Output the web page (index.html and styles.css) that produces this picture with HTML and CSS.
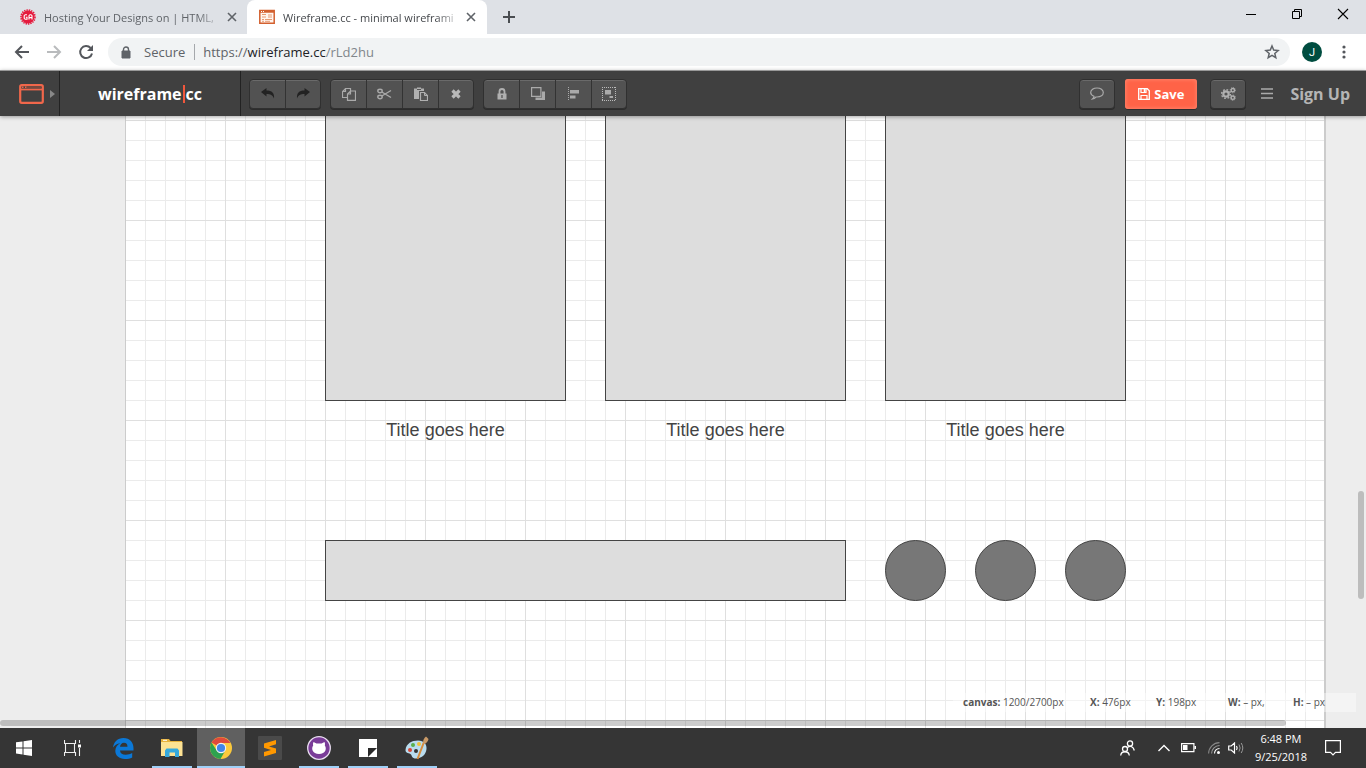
FILE: index.html
```html
<!DOCTYPE html>
<html lang="en">
<head>
<meta charset="utf-8">
<title>Wireframe.cc - minimal wireframing tool</title>
<link rel="stylesheet" href="styles.css">
</head>
<body>
<header class="browser">
  <div class="tabs">
    <div class="tab">
      <svg class="favicon" width="16" height="16" viewBox="0 0 16 16"><circle cx="8" cy="8" r="6.5" fill="#e51b3e"/><circle cx="8" cy="8" r="7" fill="none" stroke="#e51b3e" stroke-width="1.6" stroke-dasharray="1.4 1"/><path d="M7 5.700H5.200L4.200 6.700v2.600l1 1H7V8.200H5.800M9 10.500V6.700l1-1h1l1 1v3.800M9 8.600h3" fill="none" stroke="#fff" stroke-width="1.100"/></svg>
      <span class="tab-title">Hosting Your Designs on | HTML,</span>
      <button class="tab-close" aria-label="Close tab"><svg width="10" height="10" viewBox="0 0 10 10"><path d="M1 1l8 8M9 1l-8 8" stroke="#5f6368" stroke-width="1.600"/></svg></button>
    </div>
    <div class="tab tab-active">
      <svg class="favicon" width="16" height="16" viewBox="0 0 16 16"><path d="M.8 1.500h14.400v12.700H.8z" fill="#fff5ef" stroke="#d3602f" stroke-width="1.500"/><path d="M1 2.500h14" stroke="#d3602f" stroke-width="2.500"/><path d="M2 2.500h1M4 2.500h1" stroke="#fff"/><path d="M3 5.500h4M3 8h4M9 6h4M9 8h4M3 10.500h2M6 10.500h7M3 12.300h2M6 12.300h5" stroke="#e89a72"/></svg>
      <span class="tab-title">Wireframe.cc - minimal wireframi</span>
      <button class="tab-close" aria-label="Close tab"><svg width="10" height="10" viewBox="0 0 10 10"><path d="M1 1l8 8M9 1l-8 8" stroke="#5f6368" stroke-width="1.600"/></svg></button>
    </div>
    <button class="new-tab" aria-label="New tab"><svg width="12" height="12" viewBox="0 0 12 12"><path d="M6 0v12M0 6h12" stroke="#4a4d51" stroke-width="2"/></svg></button>
    <div class="window-buttons">
      <button aria-label="Minimize"><svg width="12" height="12" viewBox="0 0 12 12"><path d="M1 6.500h10" stroke="#000"/></svg></button>
      <button aria-label="Restore"><svg width="12" height="12" viewBox="0 0 12 12"><path d="M1.500 3.500h7v7h-7zM3.500 3.500v-2h7v7h-2" fill="none" stroke="#000"/></svg></button>
      <button aria-label="Close"><svg width="12" height="12" viewBox="0 0 12 12"><path d="M1 1l10 10M11 1L1 11" stroke="#000" stroke-width="1.100"/></svg></button>
    </div>
  </div>
  <div class="nav">
    <button aria-label="Back"><svg width="16" height="16" viewBox="0 0 16 16"><path d="M15 8H2M8 2L2 8l6 6" fill="none" stroke="#54575c" stroke-width="2"/></svg></button>
    <button aria-label="Forward"><svg width="16" height="16" viewBox="0 0 16 16"><path d="M1 8h13M8 2l6 6-6 6" fill="none" stroke="#b9bbbd" stroke-width="2"/></svg></button>
    <button aria-label="Reload"><svg width="16" height="16" viewBox="0 0 16 16"><path d="M12.600 4A6 6 0 1 0 14 9.500" fill="none" stroke="#54575c" stroke-width="2"/><path d="M15 1v6H9z" fill="#54575c"/></svg></button>
    <div class="omnibox">
      <svg width="10" height="13" viewBox="0 0 10 13"><path d="M1 5h8v7H1z" fill="#5f6368" stroke="#5f6368"/><path d="M2.500 5V3.500a2.500 2.500 0 0 1 5 0V5" fill="none" stroke="#5f6368" stroke-width="1.400"/></svg>
      <span class="secure">Secure</span>
      <span class="url">https://<b>wireframe.cc</b><i>/rLd2hu</i></span>
      <button aria-label="Bookmark this page"><svg width="16" height="16" viewBox="0 0 16 16"><path d="M8 2l1.700 4.100 4.400.4-3.300 2.900 1 4.300L8 11.400l-3.800 2.300 1-4.300L1.900 6.500l4.400-.4z" fill="none" stroke="#5f6368" stroke-width="1.500"/></svg></button>
    </div>
    <button class="avatar" aria-label="Profile">J</button>
    <button class="kebab" aria-label="Menu"><svg width="4" height="14" viewBox="0 0 4 14"><g fill="#54575c"><circle cx="2" cy="2" r="1.600"/><circle cx="2" cy="7" r="1.600"/><circle cx="2" cy="12" r="1.600"/></g></svg></button>
  </div>
</header>

<div class="app-bar">
  <button class="frame-picker" aria-label="Choose frame">
    <svg width="25" height="20" viewBox="0 0 25 20"><rect x="1.200" y="1.200" width="22.600" height="17.600" rx="1.500" fill="none" stroke="#f1674b" stroke-width="2.200"/><path d="M2 5.500h21" stroke="#f1674b" stroke-width="1.800"/><path d="M3 3.300h1.500M6 3.300h1.500" stroke="#f1674b" stroke-width="1.600"/><path d="M8 3.300h14" stroke="#8a4a3d"/></svg>
    <svg width="5" height="8" viewBox="0 0 5 8"><path d="M0 0l5 4-5 4z" fill="#888"/></svg>
  </button>
  <a class="logo" href="#">wireframe<span class="logo-bar"></span>cc</a>
  <div class="tools">
    <div class="group">
      <button aria-label="Undo"><svg width="14" height="14" viewBox="0 0 14 14"><path d="M0 5l5.500-4v2.500C11 3.500 13.500 6 13 11.500 11.500 8 9.500 7 5.500 7v2.500z" fill="#222"/></svg></button>
      <button aria-label="Redo"><svg width="14" height="14" viewBox="0 0 14 14"><path d="M14 5L8.500 1v2.500C3 3.500.500 6 1 11.500 2.500 8 4.500 7 8.500 7v2.500z" fill="#222"/></svg></button>
    </div>
    <div class="group">
      <button aria-label="Copy"><svg width="14" height="14" viewBox="0 0 14 14"><path d="M5.500 10.500h-5v-6l3-3h5v3M3.500 1.500v3h-3M5.500 13.300V7l3-3h5v9.300zM8.500 4v3h-3" fill="none" stroke="#aaa" stroke-width="1.200"/></svg></button>
      <button aria-label="Cut"><svg width="15" height="14" viewBox="0 0 15 14"><g fill="none" stroke="#aaa" stroke-width="1.400"><ellipse cx="3" cy="4" rx="2.200" ry="1.700"/><ellipse cx="3" cy="10" rx="2.200" ry="1.700"/><path d="M4.800 5L14 10.500M4.800 9L14 3.500"/></g></svg></button>
      <button aria-label="Paste"><svg width="14" height="14" viewBox="0 0 14 14"><path d="M0 1.500h3V.5h4v1h3V4H5v8H0z" fill="#b0b0b0"/><path d="M3 2.500h4" stroke="#555"/><path d="M6.500 5.500h4l3 3v5h-7z" fill="#555" stroke="#b0b0b0" stroke-width="1.200"/><path d="M10.500 5.500v3h3" fill="none" stroke="#b0b0b0"/></svg></button>
      <button aria-label="Delete"><svg width="12" height="12" viewBox="0 0 12 12"><path d="M2.500 2.500l7 7M9.500 2.500l-7 7" stroke="#b8b8b8" stroke-width="3.200"/></svg></button>
    </div>
    <div class="group">
      <button aria-label="Lock"><svg width="10" height="12" viewBox="0 0 10 12"><path d="M.5 5.500h9v6h-9z" fill="#b0b0b0"/><path d="M2.500 6V3.500a2.500 2.500 0 0 1 5 0V6" fill="none" stroke="#b0b0b0" stroke-width="1.800"/><path d="M5 7v3" stroke="#555" stroke-width="1.300"/></svg></button>
      <button aria-label="Arrange"><svg width="14" height="14" viewBox="0 0 14 14"><path d="M.6.6h9.300v8.800H.6z" fill="none" stroke="#aaa" stroke-width="1.200"/><path d="M11 4.500h3V13H4.500v-2.500H11z" fill="#aaa"/></svg></button>
      <button aria-label="Align"><svg width="14" height="14" viewBox="0 0 14 14"><path d="M1.500 0v14" stroke="#aaa" stroke-dasharray="1 1"/><path d="M3 3h9v3.500H3zM3 8.500h5.500v3H3z" fill="#aaa"/></svg></button>
      <button aria-label="Group"><svg width="14" height="14" viewBox="0 0 14 14"><path d="M0 .5h14M0 13.500h14M.5 0v14M13.500 0v14" fill="none" stroke="#bbb" stroke-dasharray="1 1"/><path d="M3 3h6v4.500H3zM7.500 9h3.500v2H7.500z" fill="#aaa"/></svg></button>
    </div>
  </div>
  <div class="actions">
    <button class="square" aria-label="Comments"><svg width="14" height="13" viewBox="0 0 14 13"><path d="M4 9.300C1.500 8.500.7 7 .7 5.600.7 3 3.500 1 7 1s6.300 2 6.300 4.600S10.500 10 7 10l-1 0c-1 1-2 1.700-3.500 2C3.500 11 3.800 10.500 4 9.300z" fill="none" stroke="#aaa" stroke-width="1.200"/></svg></button>
    <button class="save"><svg width="12" height="12" viewBox="0 0 12 12"><path d="M.7.7h8.600l2 2v8.600H.7z" fill="none" stroke="#fff" stroke-width="1.300"/><path d="M3 1v3.500h5V1M3 11V7.500h6V11" fill="none" stroke="#fff" stroke-width="1.200"/><path d="M6.500 1v3" stroke="#fff" stroke-width="1.500"/></svg>Save</button>
    <button class="square gear" aria-label="Settings"><svg width="15" height="14" viewBox="0 0 15 14"><g fill="none" stroke="#b0b0b0"><circle cx="5" cy="7" r="2.700" stroke-width="2.200"/><circle cx="5" cy="7" r="4.400" stroke-width="1.400" stroke-dasharray="1.700 1.750"/><circle cx="11.800" cy="3.200" r="1.700" stroke-width="1.400"/><circle cx="11.800" cy="3.200" r="2.600" stroke-dasharray="1 1"/><circle cx="11.800" cy="10.700" r="1.700" stroke-width="1.400"/><circle cx="11.800" cy="10.700" r="2.600" stroke-dasharray="1 1"/></g></svg></button>
    <button class="menu" aria-label="Menu"><svg width="12" height="11" viewBox="0 0 12 11"><path d="M0 1h12M0 5.500h12M0 10h12" stroke="#aaa" stroke-width="1.600"/></svg></button>
    <a class="sign-up" href="#">Sign Up</a>
  </div>
</div>

<main class="workspace">
  <div class="canvas">
    <div class="shape box box-1"></div>
    <div class="shape box box-2"></div>
    <div class="shape box box-3"></div>
    <p class="caption caption-1">Title goes here</p>
    <p class="caption caption-2">Title goes here</p>
    <p class="caption caption-3">Title goes here</p>
    <div class="shape strip"></div>
    <div class="shape dot dot-1"></div>
    <div class="shape dot dot-2"></div>
    <div class="shape dot dot-3"></div>
  </div>
  <div class="status">
    <span class="size"><b>canvas:</b> 1200/2700px</span>
    <span class="x"><b>X:</b> 476px</span>
    <span class="y"><b>Y:</b> 198px</span>
    <span class="w"><b>W:</b> – px,</span>
    <span><b>H:</b> – px</span>
  </div>
  <div class="scroll-x"></div>
  <div class="scroll-y"></div>
</main>

<footer class="taskbar">
  <button class="task" aria-label="Start"><svg width="16" height="16" viewBox="0 0 16 16"><path d="M0 2.300l6.500-.9v6H0zM7.500 1.200L16 0v7.400H7.500zM0 8.500h6.500v6L0 13.600zM7.500 8.500H16V16l-8.500-1.200z" fill="#fff"/></svg></button>
  <button class="task" aria-label="Task view"><svg width="17" height="16" viewBox="0 0 17 16"><path d="M.5 0v3.500h11V0M.5 16v-3.500h11V16M1.500 3.500v9M10.500 3.500v9M15.500 0v3M15.500 8v8" fill="none" stroke="#eee" stroke-width="1.100"/><path d="M14 4.500h3v3h-3z" fill="#fff"/></svg></button>
  <button class="task edge" aria-label="Edge"><svg width="21" height="21" viewBox="0 0 21 21"><path d="M0 9.500C.8 4 4.500 0 10.500 0 17 0 20.500 4.600 20.500 10v2.500H7c.2 3 2.500 4.300 5.700 4.300 2.500 0 4.700-.7 6.500-1.700v4.300c-2 1.100-4.300 1.600-7.300 1.600C6 21 2.300 17.500 2.300 12.800c0-3.500 2-6.200 5-7.600C3.700 5.600 1.600 7.300 0 9.500zM7 8.800h7.500c0-2.500-1.200-4-3.500-4C8.700 4.800 7.300 6.500 7 8.800z" fill="#0b78d7"/></svg></button>
  <button class="task open explorer" aria-label="File Explorer"><svg width="22" height="18" viewBox="0 0 22 18"><path d="M0 0h8l1.500 2H21v15H0z" fill="#e8b23c"/><path d="M0 3h21.500v14H0z" fill="#fde293"/><path d="M2 1.300h4" stroke="#fff"/><path d="M4 18v-6.500l1.500-2h11l1.500 2V18h-4v-4.500H8.500V18z" fill="#36a9dc"/></svg></button>
  <button class="task open current" aria-label="Chrome"><svg width="22" height="22" viewBox="0 0 22 22"><circle cx="11" cy="11" r="11" fill="#fbc93c"/><path d="M11 11L1.500 5.500A11 11 0 0 1 20.500 6H11z" fill="#e04a3b"/><path d="M1.500 5.500A11 11 0 0 0 10.500 22l4.800-8.500L11 11 6.700 13.500z" fill="#2da24f"/><circle cx="11" cy="11" r="5.200" fill="#f3f3f3"/><circle cx="11" cy="11" r="4.100" fill="#4285e8"/></svg></button>
  <button class="task sublime" aria-label="Sublime Text"><svg width="24" height="24" viewBox="0 0 24 24"><rect width="24" height="24" rx="1" fill="#4a4a4a"/><path d="M6 7.500L18 4v4.300l-7 2.200 7 2V17L6 20.500V16l7-2-7-2.200z" fill="#ff9800"/></svg></button>
  <button class="task open" aria-label="GitHub Desktop"><svg width="24" height="24" viewBox="0 0 24 24"><circle cx="12" cy="12" r="11.300" fill="#7a3c98" stroke="#e9def0" stroke-width="1.300"/><path d="M6.500 6l3 1.600c1.600-.3 3.400-.3 5 0l3-1.600c.6 1.300.6 2.500.3 3.600 1.200 1.500 1.200 3.500.6 5-1 2.400-3.200 3.400-6.400 3.400s-5.400-1-6.400-3.400c-.6-1.500-.6-3.500.6-5C5.900 8.500 5.900 7.300 6.500 6z" fill="#fff"/></svg></button>
  <button class="task open" aria-label="Sticky Notes"><svg width="18" height="18" viewBox="0 0 18 18"><path d="M0 0h18v18H0z" fill="#fff"/><path d="M9 9h9l-9 9z" fill="#292929"/></svg></button>
  <button class="task open" aria-label="Paint"><svg width="24" height="24" viewBox="0 0 24 24"><path d="M.5 14C1 7.500 7 4.500 13 4.500c6 0 9 4 8.500 8.500-.7 6-5 9.500-10.500 9.500-4 0-4-2.500-5-4-1.300-1.800-5.800-1-5.500-4.500z" fill="#b9dcee"/><circle cx="5" cy="14" r="2" fill="#d94735"/><circle cx="8" cy="9" r="2" fill="#58b04b"/><circle cx="14" cy="8" r="2" fill="#f0c13a"/><circle cx="11" cy="15" r="2" fill="#333"/><path d="M12.500 23L19 6" stroke="#d78d3d" stroke-width="2"/><path d="M18 7c0-3 1-5 3-6.500L23.500 3c-.5 2.500-2 4-4 5z" fill="#c99a68"/></svg></button>
  <div class="tray">
    <button class="people" aria-label="People"><svg width="15" height="16" viewBox="0 0 15 16"><g fill="none" stroke="#fff" stroke-width="1.300"><circle cx="10" cy="3.500" r="2.600"/><path d="M7.500 7.500c3-2.500 6-.5 6.800 3"/><circle cx="5" cy="9" r="2.500"/><path d="M.7 15.500c.5-5 8-5 8.600 0"/></g></svg></button>
    <button class="chevron" aria-label="Show hidden icons"><svg width="12" height="8" viewBox="0 0 12 8"><path d="M.5 7L6 1.500 11.500 7" fill="none" stroke="#fff" stroke-width="1.400"/></svg></button>
    <svg class="battery" width="15" height="10" viewBox="0 0 15 10"><path d="M.6.6h12.300v8H.6z" fill="none" stroke="#fff" stroke-width="1.200"/><path d="M2 2h4.500v5H2zM13.500 3H15v3h-1.500z" fill="#fff"/></svg>
    <svg class="wifi" width="12" height="12" viewBox="0 0 12 12"><g fill="none" stroke="#888" stroke-width="1.100"><path d="M.6 11.500A11 11 0 0 1 11.500.6"/><path d="M3.600 11.500a8 8 0 0 1 8-8" stroke="#999"/><path d="M6.500 11.500a5 5 0 0 1 5-5" stroke="#fff"/></g><circle cx="10.500" cy="10.500" r="1.500" fill="#fff"/></svg>
    <svg class="volume" width="16" height="12" viewBox="0 0 16 12"><path d="M.7 4h2.500L6.500 1v10L3.200 8H.7z" fill="none" stroke="#fff" stroke-width="1.200"/><path d="M8.500 4q1.300 2 0 4" fill="none" stroke="#fff" stroke-width="1.200"/><path d="M11 2.500q2.300 3.500 0 7M13.200 1q3.200 5 0 10" fill="none" stroke="#999"/></svg>
    <time class="clock">6:48 PM<br>9/25/2018</time>
    <button class="notes" aria-label="Notifications"><svg width="16" height="16" viewBox="0 0 16 16"><path d="M.6.6h14.800v11.800h-4.900L8 15l-2.500-2.600H.6z" fill="none" stroke="#fff" stroke-width="1.200"/></svg></button>
  </div>
</footer>
</body>
</html>
```

FILE: styles.css
```css
* { box-sizing: border-box; }
body {
  margin: 0;
  height: 100vh;
  display: flex;
  flex-direction: column;
  overflow: hidden;
  font-family: "Open Sans", "Noto Sans", sans-serif;
  font-size: 11px;
}
button {
  display: flex;
  align-items: center;
  justify-content: center;
  padding: 0;
  border: 0;
  background: none;
  color: inherit;
  font: inherit;
}
a { color: inherit; text-decoration: none; }
svg { flex: none; }

/* Browser chrome */
.browser { flex: none; background: #fff; }
.tabs { display: flex; height: 34px; background: #dee1e6; }
.tab {
  display: flex;
  align-items: center;
  width: 247px;
  padding: 0 9px 0 20px;
  color: #5f6368;
}
.tab-active {
  width: 240px;
  padding: 0 10px 0 12px;
  border-radius: 8px 8px 0 0;
  background: #fff;
  color: #45484c;
}
.tab-title {
  flex: 1;
  margin-left: 8px;
  white-space: nowrap;
  mask-image: linear-gradient(to right, #000 88%, rgba(0, 0, 0, .2));
}
.tab-close { width: 12px; height: 16px; margin-left: 8px; }
.new-tab { width: 44px; }
.window-buttons { display: flex; margin-left: auto; }
.window-buttons button { width: 46px; height: 28px; }
.nav {
  display: flex;
  align-items: center;
  height: 36px;
  padding: 0 14px 0 6px;
}
.nav > button { width: 32px; height: 32px; }
.omnibox {
  flex: 1;
  display: flex;
  align-items: center;
  height: 28px;
  margin-left: 6px;
  padding: 0 10px 0 13px;
  border-radius: 14px;
  background: #f1f3f4;
  color: #5f6368;
  font-size: 13px;
}
.secure { margin-left: 13px; padding-right: 9px; border-right: 1px solid #a5a8ac; line-height: 16px; }
.url { flex: 1; margin-left: 8px; }
.url b { color: #202124; font-weight: 400; }
.url i { color: #80868b; font-style: normal; }
.nav .avatar {
  width: 20px;
  height: 20px;
  margin: 0 20px 0 12px;
  border-radius: 50%;
  background: #004d40;
  color: #fff;
  font-family: Roboto, sans-serif;
}
.nav .kebab { width: 4px; margin-right: 6px; }

/* Application toolbar */
.app-bar {
  position: relative;
  z-index: 1;
  flex: none;
  display: flex;
  height: 46px;
  border-top: 1px solid #999;
  background: #404040;
  box-shadow: 0 1px 4px rgba(0, 0, 0, .35);
}
.frame-picker { gap: 6px; width: 60px; padding-left: 14px; border-right: 1px solid #222; }
.logo {
  display: flex;
  align-items: center;
  justify-content: center;
  width: 181px;
  border-right: 1px solid #222;
  color: #fff;
  font-size: 16px;
  font-weight: 700;
}
.logo-bar { width: 2px; height: 18px; margin: 0 1px; background: #f1573c; }
.tools { display: flex; align-items: center; gap: 9px; padding-left: 8px; }
.group, .square {
  height: 30px;
  border: 1px solid #303030;
  border-radius: 4px;
  background: #525252;
  box-shadow: inset 0 1px #6a6a6a, 0 1px #2c2c2c;
}
.group { display: flex; }
.group button { width: 36px; }
.group button + button { border-left: 1px solid #333; }
.group button:first-child, .group button:last-child { width: 35px; }
.actions { display: flex; align-items: center; margin-left: auto; padding-right: 16px; }
.square { width: 36px; }
.save {
  gap: 4px;
  width: 72px;
  height: 30px;
  margin: 0 13px 0 10px;
  border-radius: 3px;
  background: #ff6347;
  box-shadow: inset 0 0 4px #ff8e78, 0 1px #2c2c2c;
  color: #fff;
  font-size: 13px;
  font-weight: 700;
}
.menu { width: 12px; margin: 0 17px 0 15px; }
.sign-up { color: #b5b5b5; font-size: 16px; font-weight: 700; }

/* Drawing area */
.workspace { position: relative; flex: 1; min-height: 0; overflow: hidden; background: #ededed; }
.canvas {
  position: relative;
  width: 1201px;
  height: 100%;
  margin-left: 125px;
  border-left: 1px solid #ccc;
  border-right: 2px solid #ccc;
  background-color: #fff;
  background-image:
    linear-gradient(to right, #dfdfdf 1px, transparent 1px),
    linear-gradient(#dfdfdf 1px, transparent 1px),
    linear-gradient(to right, #ebebeb 1px, transparent 1px),
    linear-gradient(#ebebeb 1px, transparent 1px);
  background-size: 100px 100px, 100px 100px, 20px 20px, 20px 20px;
  background-position: -1px 4px;
}
.shape { position: absolute; border: 1px solid #444; background: #ddd; }
.box { top: -20px; width: 241px; height: 305px; }
.box-1, .caption-1 { left: 199px; }
.box-2, .caption-2 { left: 479px; }
.box-3, .caption-3 { left: 759px; }
.caption {
  position: absolute;
  top: 304px;
  width: 241px;
  margin: 0;
  color: #444;
  font: 18px/20px "Liberation Sans", Arial, sans-serif;
  text-align: center;
}
.strip { top: 424px; left: 199px; width: 521px; height: 61px; }
.dot { top: 424px; width: 61px; height: 61px; border-radius: 50%; background: #777; }
.dot-1 { left: 759px; }
.dot-2 { left: 849px; }
.dot-3 { left: 939px; }
.status {
  position: absolute;
  right: 10px;
  bottom: 16px;
  display: flex;
  width: 403px;
  padding-left: 10px;
  background: rgba(255, 255, 255, .4);
  color: #555;
  font-size: 10px;
  line-height: 19px;
  white-space: nowrap;
}
.size { width: 127px; }
.x { width: 66px; }
.y { width: 72px; }
.w { width: 65px; }
.scroll-x, .scroll-y { position: absolute; border-radius: 3px; background: rgba(0, 0, 0, .2); }
.scroll-x { left: 0; right: 80px; bottom: 2px; height: 6px; }
.scroll-y { top: 375px; right: 2px; width: 6px; height: 108px; }

/* Desktop taskbar */
.taskbar { flex: none; display: flex; height: 40px; background: #353535; color: #fff; }
.task { width: 48px; border-bottom: 2px solid transparent; padding-top: 2px; }
.edge { width: 55px; }
.task.open { width: 40px; margin: 0 5px 0 4px; border-color: #9fd0f8; }
.task.explorer { margin: 0 5px 0 1px; }
.task.current { width: 48px; margin: 0; background: #606060; }
.sublime { width: 50px; }
.tray { display: flex; align-items: center; margin-left: auto; }
.people { margin-right: 23px; }
.chevron { margin-right: 11px; }
.battery { margin-right: 12px; }
.wifi { margin-right: 8px; }
.volume { margin-right: 11px; }
.clock { line-height: 18px; text-align: center; }
.notes { width: 16px; margin: 0 25px 0 18px; }
```
